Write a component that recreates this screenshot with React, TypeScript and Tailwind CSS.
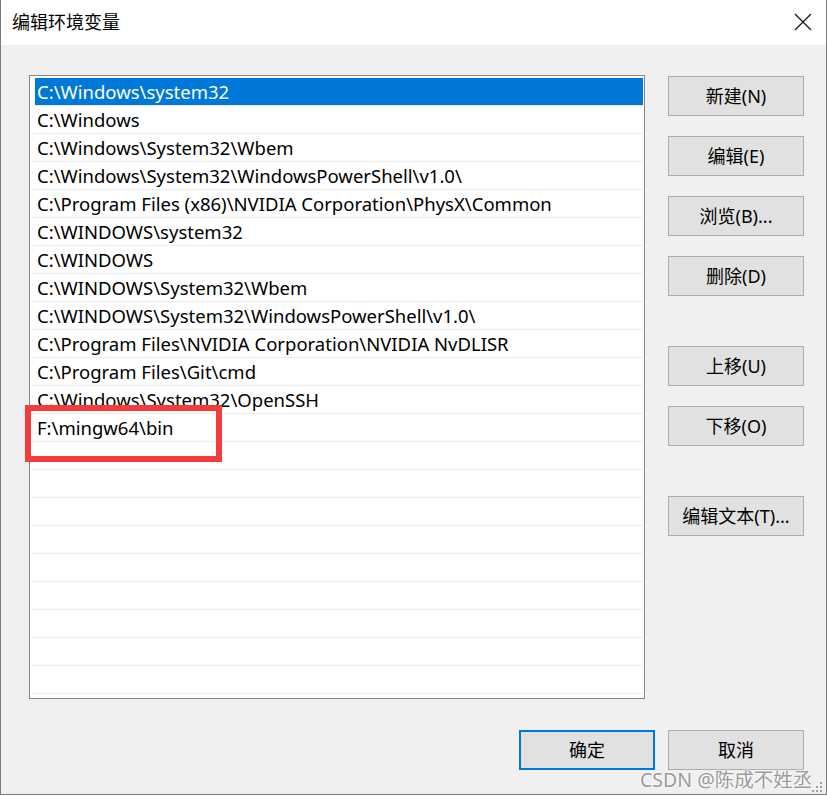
import React from "react";

const rows = [
  "C:\\Windows\\system32",
  "C:\\Windows",
  "C:\\Windows\\System32\\Wbem",
  "C:\\Windows\\System32\\WindowsPowerShell\\v1.0\\",
  "C:\\Program Files (x86)\\NVIDIA Corporation\\PhysX\\Common",
  "C:\\WINDOWS\\system32",
  "C:\\WINDOWS",
  "C:\\WINDOWS\\System32\\Wbem",
  "C:\\WINDOWS\\System32\\WindowsPowerShell\\v1.0\\",
  "C:\\Program Files\\NVIDIA Corporation\\NVIDIA NvDLISR",
  "C:\\Program Files\\Git\\cmd",
  "C:\\Windows\\System32\\OpenSSH",
  "F:\\mingw64\\bin",
];

const font = { fontFamily: '"Segoe UI", "Noto Sans", "Noto Sans CJK SC", sans-serif' };

function Btn({ label, primary }: { label: string; primary?: boolean }) {
  return (
    <div
      className={
        "w-[136px] h-[40px] flex items-center justify-center bg-[#e1e1e1] text-[18px] text-black " +
        (primary ? "border-2 border-[#0078d7]" : "border border-[#adadad]")
      }
    >
      {label}
    </div>
  );
}

export default function App() {
  const total = 22;
  return (
    <div
      className="relative w-[827px] h-[796px] overflow-hidden bg-white"
      style={font}
    >
      <div className="w-[827px] h-[795px] border-l border-r border-b border-[#7a7a7a] bg-[#f0f0f0] flex flex-col">
        {/* title bar */}
        <div className="h-[45px] bg-white flex items-center justify-between pl-[11px] pr-[14px] shrink-0">
          <span className="text-[18px] text-black leading-none mt-[-2px]">编辑环境变量</span>
          <svg width="18" height="18" viewBox="0 0 18 18" className="mt-[-2px]">
            <path d="M1 1 L17 17 M17 1 L1 17" stroke="#111" strokeWidth="1.2" fill="none" />
          </svg>
        </div>
        {/* main */}
        <div className="flex pt-[30px] pl-[28px]">
          <div className="w-[616px] h-[624px] border border-[#828790] bg-white pt-[2px] pl-[2px] pr-px">
            {Array.from({ length: total }).map((_, i) => {
              const text = rows[i];
              const sel = i === 0;
              return (
                <div key={i} className="h-[28px] flex flex-col">
                  <div
                    className={
                      "h-[27px] flex items-center text-[18.5px] whitespace-nowrap " +
                      (sel ? "bg-[#0078d7] text-white ml-[3px] pl-[2px]" : "text-black pl-[5px]")
                    }
                  >
                    {text ?? ""}
                  </div>
                  <div className="h-px bg-[#ececec]" />
                </div>
              );
            })}
          </div>
          <div className="ml-[23px] mt-px flex flex-col">
            <div className="flex flex-col gap-[20px]">
              <Btn label="新建(N)" />
              <Btn label="编辑(E)" />
              <Btn label="浏览(B)..." />
              <Btn label="删除(D)" />
            </div>
            <div className="flex flex-col gap-[20px] mt-[50px]">
              <Btn label="上移(U)" />
              <Btn label="下移(O)" />
            </div>
            <div className="mt-[50px]">
              <Btn label="编辑文本(T)..." />
            </div>
          </div>
        </div>
        {/* bottom buttons */}
        <div className="flex justify-end gap-[13px] pr-[22px] mt-[31px]">
          <Btn label="确定" primary />
          <Btn label="取消" />
        </div>
      </div>

      {/* red annotation */}
      <div className="absolute left-[25px] top-[405px] w-[197px] h-[57px] border-[6px] border-[#f53b3b]" />

      {/* watermark */}
      <div
        className="absolute left-[640px] top-[765px] text-[19.5px] text-[#9a9a9a] whitespace-nowrap"
        style={{ textShadow: "0 0 2px #fff, 0 0 2px #fff" }}
      >
        CSDN @陈成不姓丞
      </div>

      {/* resize grip */}
      <svg className="absolute left-[812px] top-[782px]" width="12" height="12" viewBox="0 0 12 12">
        <rect x="8" y="0" width="2" height="2" fill="#a0a0a0" />
        <rect x="4" y="4" width="2" height="2" fill="#a0a0a0" />
        <rect x="8" y="4" width="2" height="2" fill="#a0a0a0" />
        <rect x="0" y="8" width="2" height="2" fill="#a0a0a0" />
        <rect x="4" y="8" width="2" height="2" fill="#a0a0a0" />
        <rect x="8" y="8" width="2" height="2" fill="#a0a0a0" />
      </svg>
    </div>
  );
}
